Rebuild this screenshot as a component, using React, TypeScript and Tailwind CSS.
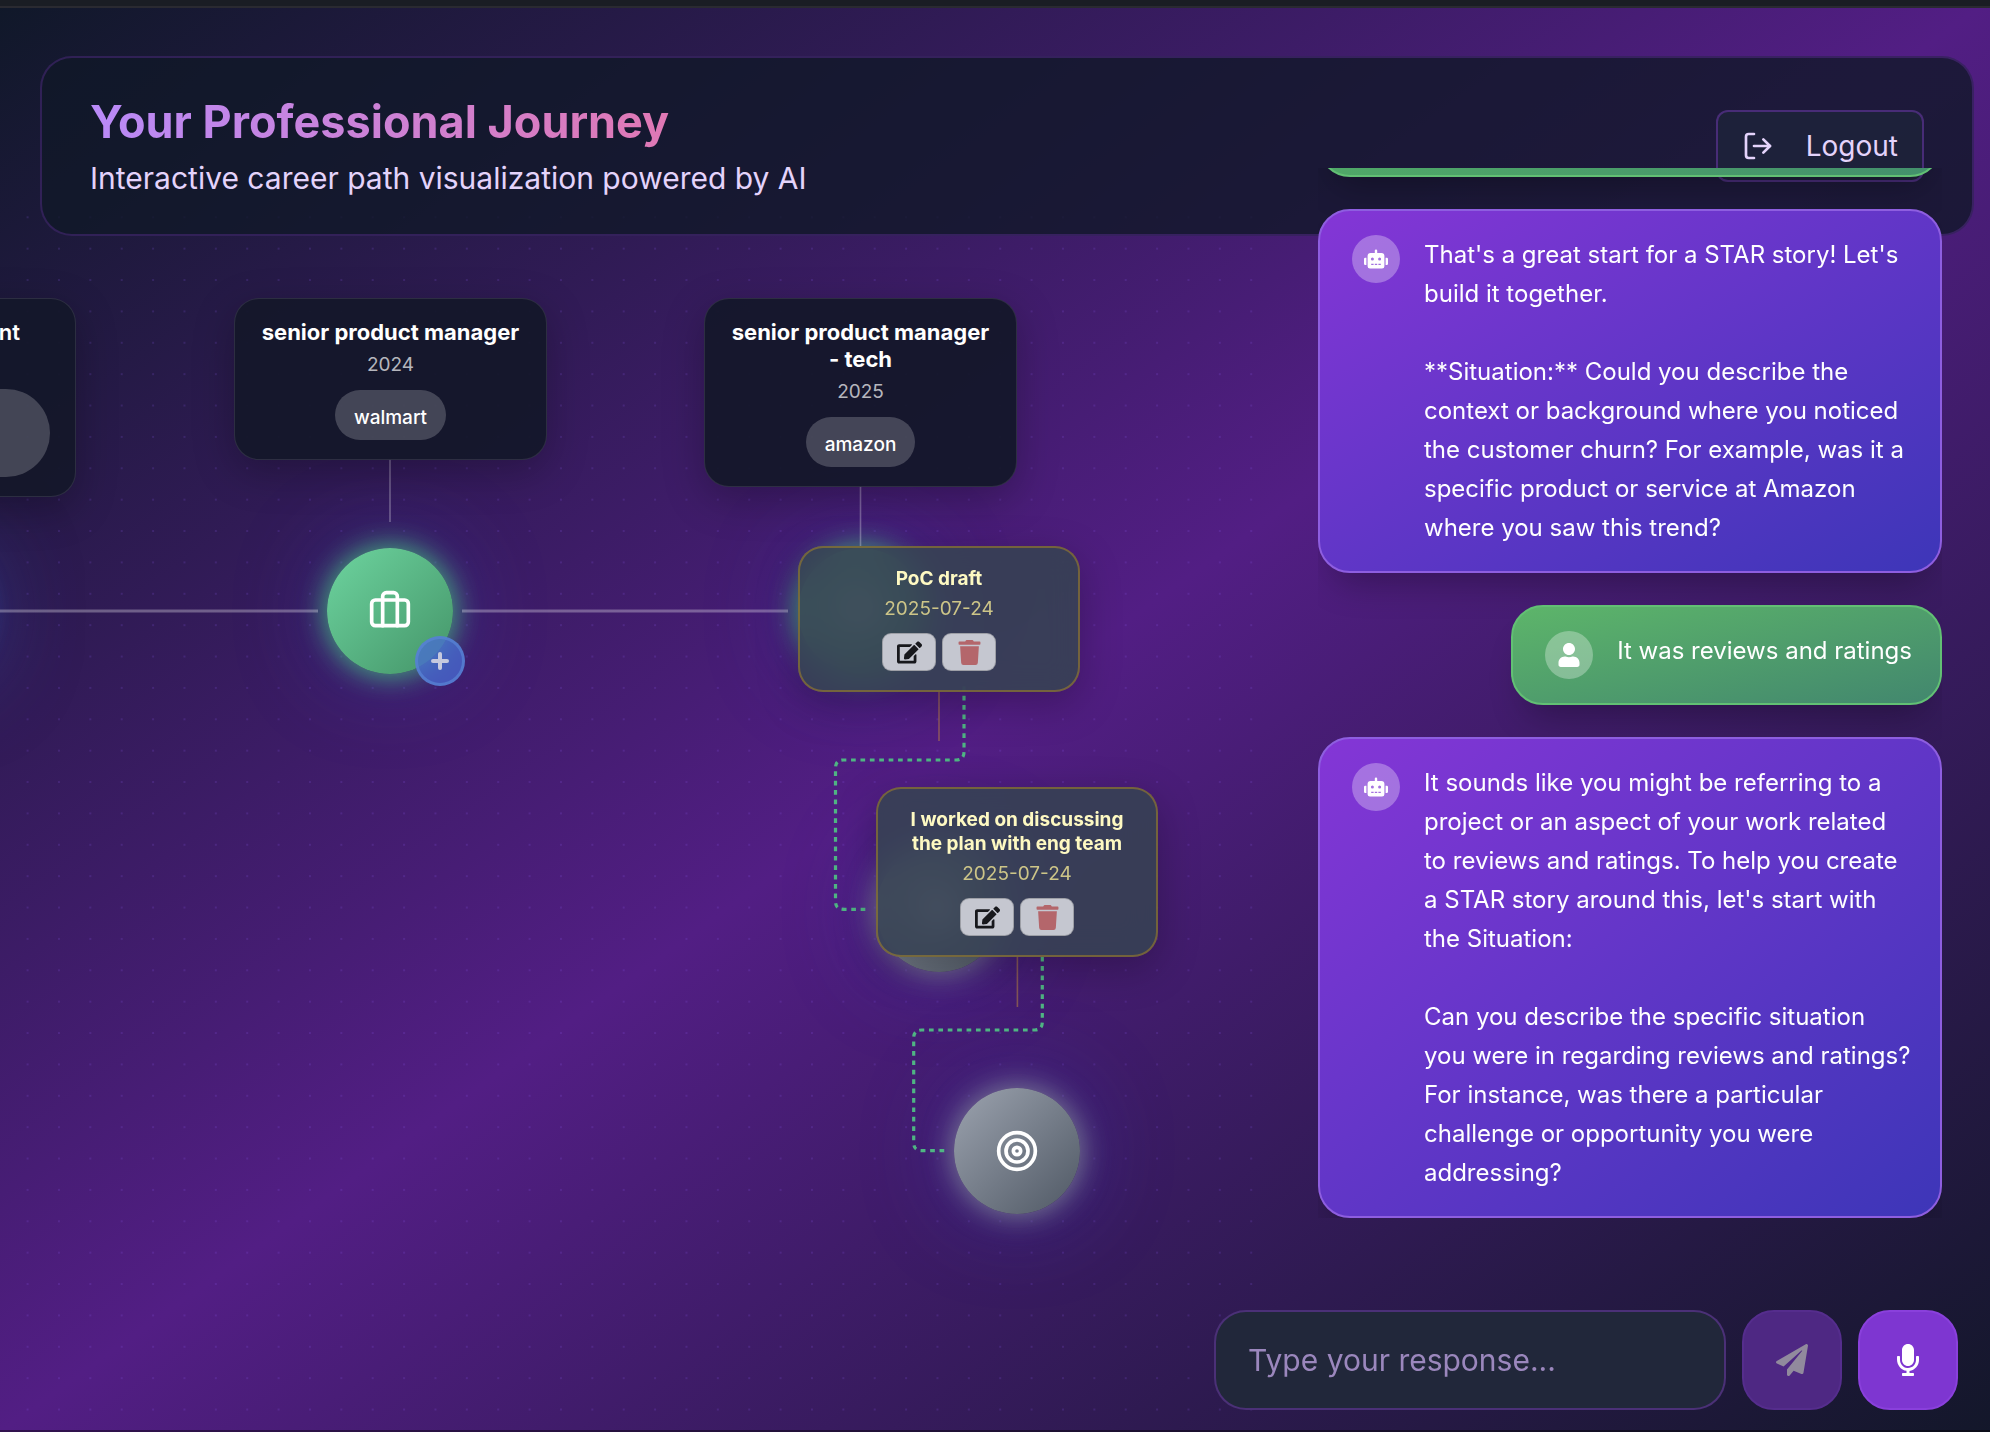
import { Briefcase, LogOut, Plus, Target } from "lucide-react";
import { FaEdit, FaMicrophone, FaPaperPlane, FaRobot, FaTrash, FaUser } from "react-icons/fa";

function Header() {
  return (
    <header className="mt-12 mr-4 ml-10 flex items-start justify-between rounded-[32px] border-2 border-purple-500/20 bg-gray-900/80 px-12 pt-9 pb-8">
      <div>
        <h1 className="w-fit bg-[linear-gradient(to_right,#b98af8,#e078b4)] bg-clip-text text-[45px] leading-[56px] font-bold text-transparent">
          Your Professional Journey
        </h1>
        <p className="mt-1 text-[30px] leading-[48px] text-[#e4d3fb]">
          Interactive career path visualization powered by AI
        </p>
      </div>
      <button className="mt-4 flex h-[72px] items-center gap-8 rounded-xl border-2 border-purple-500/30 bg-gray-800/50 px-6 text-[28px] text-[#e4d3fb]">
        <LogOut size={32} />
        Logout
      </button>
    </header>
  );
}

function JobCard({ title, year, company, className }: { title: string; year: string; company: string; className: string }) {
  return (
    <article
      className={`absolute flex w-[313px] flex-col items-center rounded-[25px] border border-white/10 bg-[#14172a]/95 px-[19px] pt-5 pb-[19px] text-center shadow-[0_12px_40px_rgba(0,0,0,0.25)] ${className}`}
    >
      <h2 className="text-[22px] leading-[27px] font-bold text-white">{title}</h2>
      <p className="mt-[6px] text-[19px] leading-[26px] text-white/70">{year}</p>
      <span className="mt-3 h-[50px] rounded-full bg-white/20 px-[19px] pt-[3px] text-[19px] leading-[50px] font-medium text-white">
        {company}
      </span>
    </article>
  );
}

function MilestoneCard({ title, date, className }: { title: string; date: string; className: string }) {
  return (
    <article
      className={`absolute flex w-[282px] flex-col items-center rounded-[25px] border-2 border-amber-400/30 bg-gray-700/90 px-5 py-[19px] text-center shadow-[0_12px_40px_rgba(0,0,0,0.25)] backdrop-blur-[15px] ${className}`}
    >
      <h2 className="text-[19px] leading-6 font-bold text-yellow-100">{title}</h2>
      <p className="mt-[6px] text-[19px] leading-6 text-[#cdc588]">{date}</p>
      <div className="mt-3 flex gap-[6px]">
        <button
          aria-label="Edit"
          className="flex h-[38px] w-[54px] items-center justify-center rounded-[9px] border border-black/20 bg-[#c5c7d0] text-[#17181c]"
        >
          <FaEdit size={25} />
        </button>
        <button
          aria-label="Delete"
          className="flex h-[38px] w-[54px] items-center justify-center rounded-[9px] border border-black/20 bg-[#c5c7d0] text-[#b4666b]"
        >
          <FaTrash size={25} />
        </button>
      </div>
    </article>
  );
}

const glowGreen = "shadow-[0_0_28px_2px_rgba(74,222,128,0.75),0_0_94px_rgba(59,60,200,0.45)]";
const glowGray = "shadow-[0_0_28px_2px_rgba(148,163,160,0.7),0_0_94px_rgba(59,60,200,0.45)]";

function Journey() {
  return (
    <section className="absolute inset-0 overflow-hidden" aria-label="Career timeline">
      <svg className="absolute inset-0 h-full w-[1266px]" aria-hidden="true">
        <defs>
          <pattern id="dots" x="11.9" y="201.6" width="31.375" height="31.375" patternUnits="userSpaceOnUse">
            <circle cx="15.7" cy="15.7" r="0.9" fill="#8b5cf6" fillOpacity="0.25" />
          </pattern>
        </defs>
        <rect x="0" y="202" width="1266" height="1228" fill="url(#dots)" />
      </svg>

      <div className="absolute top-[548px] left-[-144px] size-[126px] rounded-full bg-blue-500 shadow-[0_0_28px_2px_rgba(59,130,246,0.4),0_0_94px_rgba(59,100,220,0.5)]" />
      <div className={`absolute top-[548px] left-[327px] flex size-[126px] items-center justify-center rounded-full bg-[linear-gradient(135deg,#6dd49f,#449468)] text-white ${glowGreen}`}>
        <Briefcase size={44} />
      </div>
      <div className={`absolute top-[548px] left-[798px] flex size-[126px] items-center justify-center rounded-full bg-[linear-gradient(135deg,#6dd49f,#449468)] text-white ${glowGreen}`}>
        <Briefcase size={44} />
      </div>
      <div className={`absolute top-[846px] left-[876px] flex size-[126px] items-center justify-center rounded-full bg-[linear-gradient(135deg,#9ca3af,#4f5864)] text-white ${glowGray}`}>
        <Target size={44} />
      </div>
      <div className={`absolute top-[1088px] left-[954px] flex size-[126px] items-center justify-center rounded-full bg-[linear-gradient(135deg,#9ca3af,#4f5864)] text-white ${glowGray}`}>
        <Target size={44} />
      </div>
      <button
        aria-label="Add milestone"
        className="absolute top-[636px] left-[415px] flex size-[50px] items-center justify-center rounded-full border-[3px] border-[#5a86d6]/70 bg-[#486cd4]/75 text-[#c6c9de]"
      >
        <Plus size={24} strokeWidth={4} />
      </button>

      <svg className="absolute inset-0 h-full w-full" fill="none" aria-hidden="true">
        <path d="M0 611H318M462 611H788" stroke="#fff" strokeOpacity="0.3" strokeWidth="3" />
        <path d="M390 459V522M860.5 486V546" stroke="#fff" strokeOpacity="0.3" strokeWidth="1.6" />
        <path d="M939 691V741M1017.4 956V1007" stroke="#fbbf24" strokeOpacity="0.35" strokeWidth="1.6" />
        <g stroke="#4fb583" strokeWidth="3.2" strokeDasharray="4.7 4.7">
          <path d="M964 686.3V752Q964 760 956 760H843.5Q835.5 760 835.5 768V901.3Q835.5 909.3 843.5 909.3H867" />
          <path d="M1042.3 956.7V1022Q1042.3 1030 1034.3 1030H921.7Q913.7 1030 913.7 1038V1142.7Q913.7 1150.7 921.7 1150.7H945" />
        </g>
      </svg>

      <article className="absolute top-[298px] left-[-237px] flex h-[199px] w-[313px] flex-col items-end rounded-[25px] border border-white/10 bg-[#14172a]/95 px-[19px] pt-5 shadow-[0_12px_40px_rgba(0,0,0,0.25)]">
        <h2 className="pr-9 text-[22px] leading-[27px] font-semibold text-white">nt</h2>
        <div className="mt-[43px] mr-[6px] h-[88px] w-[261px] rounded-full bg-white/20" />
      </article>
      <JobCard title="senior product manager" year="2024" company="walmart" className="top-[298px] left-[234px]" />
      <JobCard title={"senior product manager -\u00a0tech"} year="2025" company="amazon" className="top-[298px] left-[704px]" />
      <MilestoneCard title="PoC draft" date="2025-07-24" className="top-[546px] left-[798px]" />
      <MilestoneCard title="I worked on discussing the plan with eng team" date="2025-07-24" className="top-[787px] left-[876px]" />
    </section>
  );
}

function Bubble({ from, text }: { from: "bot" | "user"; text: string }) {
  const tone =
    from === "bot"
      ? "w-full border-[#8e5ee0] bg-[linear-gradient(to_bottom_right,#8436d6,#3d36b8)]"
      : "self-end border-[#62c074] bg-[linear-gradient(to_bottom_right,#5db56a,#42876e)]";
  return (
    <div className={`flex shrink-0 items-start gap-6 rounded-[32px] border-2 py-6 pr-7 pl-8 shadow-[0_24px_36px_-16px_rgba(0,0,0,0.3)] ${tone}`}>
      <span className="flex size-12 shrink-0 items-center justify-center rounded-full bg-white/30 text-white">
        {from === "bot" ? <FaRobot size={24} /> : <FaUser size={24} />}
      </span>
      <p className="text-[24px] leading-[39px] whitespace-pre-line text-white">{text}</p>
    </div>
  );
}

function Chat() {
  return (
    <aside className="absolute top-[168px] right-8 bottom-[22px] flex w-[744px] flex-col justify-between">
      <div className="mr-4 ml-auto flex h-[1050px] w-[624px] flex-col justify-end gap-8 overflow-hidden">
        <div className="h-[100px] w-full shrink-0 rounded-[32px] border-2 border-[#62c074] bg-[linear-gradient(to_right,#50a868,#43906c)] shadow-[0_24px_36px_-16px_rgba(0,0,0,0.3)]" />
        <Bubble
          from="bot"
          text={"That's a great start for a STAR story! Let's build it together.\n\n**Situation:** Could you describe the context or background where you noticed the customer churn? For example, was it a specific product or service at Amazon where you saw this trend?"}
        />
        <Bubble from="user" text="It was reviews and ratings" />
        <Bubble
          from="bot"
          text={"It sounds like you might be referring to a project or an aspect of your work related to reviews and ratings. To help you create a STAR story around this, let's start with the Situation:\n\nCan you describe the specific situation you were in regarding reviews and ratings? For instance, was there a particular challenge or opportunity you were addressing?"}
        />
      </div>
      <form className="flex gap-4">
        <input
          aria-label="Your response"
          placeholder="Type your response..."
          className="h-[100px] min-w-0 flex-1 rounded-[32px] border-2 border-purple-500/30 bg-[#21273a] px-8 text-[30px] text-white placeholder:text-[#9b87bd]"
        />
        <button
          type="button"
          aria-label="Send"
          className="flex size-[100px] items-center justify-center rounded-[32px] border-2 border-[#552d8d] bg-[#4e2883] text-[#918a9d]"
        >
          <FaPaperPlane size={32} />
        </button>
        <button
          type="button"
          aria-label="Record"
          className="flex size-[100px] items-center justify-center rounded-[32px] border-2 border-[#8a40dc] bg-[#7e36d1] text-white"
        >
          <FaMicrophone size={32} />
        </button>
      </form>
    </aside>
  );
}

export default function App() {
  return (
    <div className="relative flex min-h-screen flex-col overflow-hidden bg-[linear-gradient(to_bottom_right,#101829,#521e84,#13172a)] font-['Inter',sans-serif]">
      <div className="h-2 border-b-2 border-[#2a2a31] bg-[#1a1d24]" />
      <Journey />
      <div className="relative">
        <Header />
      </div>
      <Chat />
      <div className="mt-auto h-[2px] bg-black/40" />
    </div>
  );
}
